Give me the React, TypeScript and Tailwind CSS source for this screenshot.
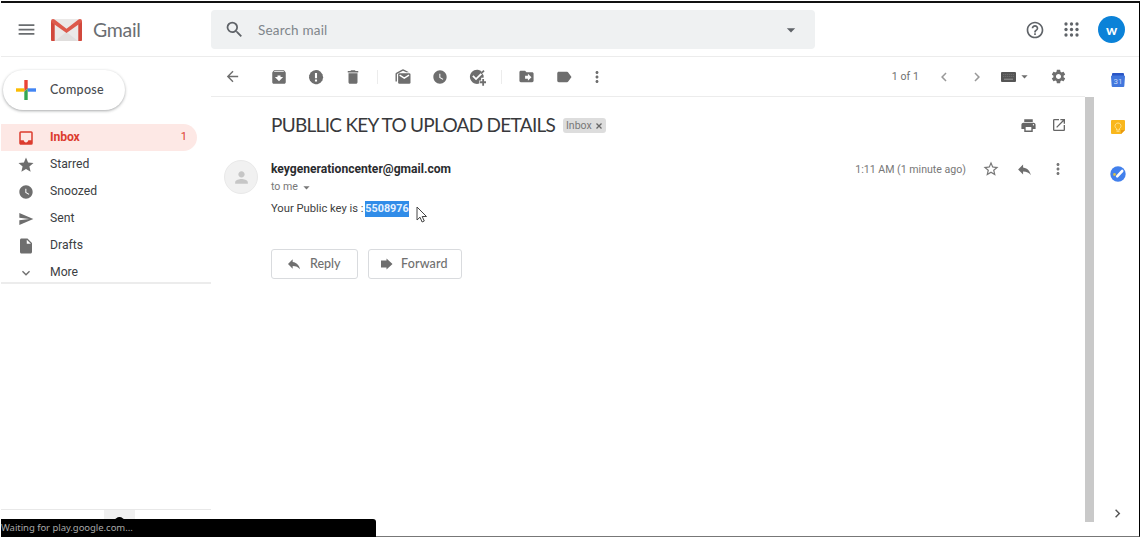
import type { ReactNode } from "react";
import {
  MdArchive,
  MdArrowBack,
  MdArrowDropDown,
  MdChevronLeft,
  MdChevronRight,
  MdDelete,
  MdDriveFileMove,
  MdExpandMore,
  MdHelpOutline,
  MdInsertDriveFile,
  MdLabel,
  MdMenu,
  MdMoreVert,
  MdOpenInNew,
  MdPerson,
  MdPrint,
  MdReply,
  MdSearch,
  MdSend,
  MdSettings,
  MdStar,
  MdStarBorder,
  MdWatchLater,
} from "react-icons/md";

function GmailLogo() {
  return (
    <svg width="31" height="22" viewBox="0 0 31 22">
      <rect x="1" y="0" width="29" height="22" rx="1.5" fill="#ebe9e8" />
      <path d="M4 22 15.5 13 27 22Z" fill="#e0dedd" />
      <path d="M0 2v18.500q0 1.500 1.500 1.500H3.500V5.500l12 8.500L27.500 5.500V22h2q1.500 0 1.500-1.500V2Q31 0 29 0 28 0 27.500.500L15.500 9.800 3.500.500Q3 0 2 0 0 0 0 2Z" fill="#dd5a4c" />
      <path d="M0 3v17.500q0 1.500 1.500 1.500H3.500V5.500ZM31 3v17.500q0 1.500-1.500 1.500H27.500V5.500Z" fill="#d1483c" />
    </svg>
  );
}

function AppsIcon() {
  const dots = [2, 7.5, 13];
  return (
    <svg width="15" height="15" viewBox="0 0 15 15" fill="#5f6368">
      {dots.map((y) => dots.map((x) => <circle key={`${x}-${y}`} cx={x} cy={y} r="1.65" />))}
    </svg>
  );
}

function PlusIcon() {
  return (
    <svg width="20" height="20" viewBox="0 0 20 20">
      <path d="M8.300 0h3.400v8.300l-3.400 3.400Z" fill="#ea4335" />
      <path d="M0 8.300h8.300v3.400H0Z" fill="#fbbc04" />
      <path d="M11.700 8.300H20v3.400h-8.300Z" fill="#4285f4" />
      <path d="M8.300 11.700l3.400-3.400V20h-3.400Z" fill="#34a853" />
    </svg>
  );
}

function SpamIcon() {
  return (
    <svg width="18" height="18" viewBox="0 0 24 24">
      <path d="M12 2.500 8.100 3.700 4.900 5.900 3 9.500 2.600 13 4 17l3 3.100 4 1.500h3l4-2 2.600-3.200.9-4.100-1-4L18 5l-3-2Z" fill="#6e6e6e" />
      <path d="M10.600 6.500h2.800v7h-2.800ZM10.600 15.300h2.800V18h-2.800Z" fill="#fff" />
    </svg>
  );
}

function UnreadIcon() {
  return (
    <svg width="18" height="18" viewBox="0 0 24 24">
      <path d="M2 18V8q0-1 1-1.600L11 2q1-.5 2 0l7 3.800h-3.600L12 3.700 3.900 8v10Z" fill="#6e6e6e" />
      <path d="M5.500 8.800Q5.500 7 7.300 7h12.900Q22 7 22 8.800v10.400q0 1.800-1.800 1.800H7.300q-1.800 0-1.800-1.800Z" fill="#6e6e6e" />
      <path d="m7.500 9.500 6.200 4 6.300-4" fill="none" stroke="#fff" strokeWidth="1.900" />
    </svg>
  );
}

function AddTaskIcon() {
  return (
    <svg width="18" height="18" viewBox="0 0 24 24">
      <path d="M17.500 4A9.500 9.500 0 1 0 15 20.800V16.500h2.500V13h3.200q.3-1.500.1-3Z" fill="#6e6e6e" />
      <path d="m6.500 10.500 4.200 4.200L21 4.500" fill="none" stroke="#fff" strokeWidth="2.400" />
      <path d="M20.500 2.500 22.200 4.200 18 8.300 16.500 6.600Z" fill="#6e6e6e" />
      <path d="M19 14.500h2.400v3.300h3.100v2.400h-3.100v3.300H19v-3.300h-3.200v-2.400H19Z" fill="#6e6e6e" />
    </svg>
  );
}

function KeyboardIcon() {
  return (
    <svg width="15" height="10" viewBox="0 0 15 10">
      <rect width="15" height="10" rx="1" fill="#555" />
      <path d="M2 2.500h11M2 4.500h11" stroke="#6c6c6c" strokeWidth="1" strokeDasharray="1.300 .7" />
      <path d="M3 7.200h9" stroke="#999" strokeWidth="1" />
    </svg>
  );
}

function InboxIcon() {
  return (
    <svg width="18" height="18" viewBox="0 0 24 24" fill="#dc3b2e">
      <path d="M19 3H5a2 2 0 0 0-2 2v14c0 1.100.9 2 2 2h14a2 2 0 0 0 2-2V5a2 2 0 0 0-2-2Zm0 12h-4c0 1.600-1.400 3-3 3s-3-1.400-3-3H5V5h14Z" />
    </svg>
  );
}

function ForwardIcon() {
  return (
    <svg width="13" height="12" viewBox="0 0 13 12" fill="#6e6e6e">
      <path d="M1 2.500h5.500V.5L12.500 6l-6 5.500v-2H1Z" />
    </svg>
  );
}

function CalendarIcon() {
  return (
    <svg width="14" height="14" viewBox="0 0 14 14">
      <rect x="1" width="12" height="5" rx="1" fill="#2a56c6" />
      <path d="M0 3.500q0-1 1-1h12q1 0 1 1L13.300 13q0 1-1 1H1.700q-1 0-1-1Z" fill="#4277dd" />
      <text x="7" y="11.300" textAnchor="middle" fontSize="8" fill="#c5d7fa" className="font-['Roboto',sans-serif]">31</text>
    </svg>
  );
}

function KeepIcon() {
  return (
    <svg width="14" height="14" viewBox="0 0 14 14">
      <path d="M1 0h12q1 0 1 1v9l-4 4H1q-1 0-1-1V1q0-1 1-1Z" fill="#f9b71c" />
      <path d="M10 14v-4h4Z" fill="#e89a10" />
      <path d="M5.500 8.600a3 3 0 1 1 3 0V10h-3Z" fill="none" stroke="#ffe08a" strokeWidth="1" />
      <path d="M5.500 11.300h3" stroke="#ffe08a" strokeWidth="1" />
    </svg>
  );
}

function TasksIcon() {
  return (
    <svg width="16" height="16" viewBox="0 0 16 16">
      <circle cx="8" cy="8" r="7.700" fill="#4280ec" />
      <path d="m7.200 10.300 5-5.300" stroke="#fff" strokeWidth="2.600" strokeLinecap="round" />
      <circle cx="4.500" cy="8.500" r="1.400" fill="#d9c04a" />
    </svg>
  );
}

function Pointer() {
  return (
    <svg width="12" height="18" viewBox="0 0 12 18">
      <path d="M1 1v13l3-2.800 2.100 4.800 2.200-1-2.100-4.500h4.300Z" fill="#fff" stroke="#444" strokeWidth="1" />
    </svg>
  );
}

function Slot({ children, wide = false }: { children: ReactNode; wide?: boolean }) {
  return <span className={`flex h-full items-center justify-center ${wide ? "w-[30px]" : "w-[37px]"}`}>{children}</span>;
}

function Divider() {
  return <span className="mx-1.5 h-3.5 w-px bg-[#ececec]" />;
}

const folders = [
  { label: "Starred", icon: <MdStar size={18} /> },
  { label: "Snoozed", icon: <MdWatchLater size={16} /> },
  { label: "Sent", icon: <MdSend size={16} /> },
  { label: "Drafts", icon: <MdInsertDriveFile size={18} /> },
  { label: "More", icon: <MdExpandMore size={16} /> },
];

function Header() {
  return (
    <header className="flex h-[54px] shrink-0 items-center border-b border-[#ececec]">
      <MdMenu size={21} className="ml-[15px] shrink-0 text-[#6a6d70]" />
      <div className="ml-[14px] shrink-0"><GmailLogo /></div>
      <span className="ml-[11px] w-[118px] pt-px text-[19.5px] tracking-[-0.3px] text-[#6b6e72]">Gmail</span>
      <div className="flex h-[39px] w-[604px] shrink-0 items-center rounded-[4px] bg-[#eff1f2]">
        <MdSearch size={21} className="ml-[13px] text-[#5f6368]" />
        <span className="ml-[13px] pt-px text-[13.5px] tracking-[0.18px] text-[#80868b]">Search mail</span>
        <MdArrowDropDown size={20} className="mr-[14px] ml-auto text-[#5f6368]" />
      </div>
      <MdHelpOutline size={20} className="ml-[210px] shrink-0 text-[#5f6368]" />
      <div className="ml-[19px] shrink-0"><AppsIcon /></div>
      <span className="ml-[19px] flex size-[27px] shrink-0 items-center justify-center rounded-full bg-[#0b82d8] pb-px text-[14px] font-bold text-white">w</span>
    </header>
  );
}

function Sidebar() {
  return (
    <nav className="flex w-[210px] shrink-0 flex-col">
      <button className="mt-[13px] ml-[2px] flex h-[40px] w-[122px] shrink-0 items-center rounded-full bg-white shadow-[0_1px_3px_rgba(60,64,67,0.45)]">
        <span className="ml-[13px]"><PlusIcon /></span>
        <span className="ml-[14px] text-[12.5px] font-medium tracking-[0.3px] text-[#4a4d51]">Compose</span>
      </button>
      <div className="mt-[14px] flex h-[27px] w-[196px] shrink-0 items-center rounded-r-full bg-[#fde8e5] font-['Roboto',sans-serif] text-[#dc3b2e]">
        <span className="flex w-[49px] justify-center pr-px pl-[2px]"><InboxIcon /></span>
        <span className="text-[12.2px] font-bold tracking-[-0.1px]">Inbox</span>
        <span className="mr-[10px] ml-auto text-[11px]">1</span>
      </div>
      {folders.map((f) => (
        <div key={f.label} className="flex h-[27px] shrink-0 items-center font-['Roboto',sans-serif] text-[12.2px] text-[#3c4043]">
          <span className="flex w-[49px] justify-center pr-px pl-[2px] text-[#6e6e6e]">{f.icon}</span>
          <span className="-mt-px">{f.label}</span>
        </div>
      ))}
      <div className="-mt-[4px] h-[2px] shrink-0 bg-[#ececec]" />
      <div className="mt-auto h-[27px] shrink-0 border-t border-[#e8e8e8]">
        <div className="ml-[103px] flex h-full w-[31px] justify-center bg-[#f0f0f0] pt-[7px]">
          <span className="size-[9px] rounded-full bg-black" />
        </div>
      </div>
    </nav>
  );
}

function Toolbar() {
  return (
    <div className="flex h-[40px] shrink-0 items-center border-b border-[#ececec] text-[#6e6e6e]">
      <MdArrowBack size={17} className="ml-[13px]" />
      <span className="w-[19px]" />
      <Slot><MdArchive size={18} /></Slot>
      <Slot><SpamIcon /></Slot>
      <Slot><MdDelete size={18} /></Slot>
      <Divider />
      <Slot><UnreadIcon /></Slot>
      <Slot><MdWatchLater size={16} /></Slot>
      <Slot><AddTaskIcon /></Slot>
      <Divider />
      <Slot><MdDriveFileMove size={17} /></Slot>
      <Slot><MdLabel size={18} /></Slot>
      <Slot wide><MdMoreVert size={18} /></Slot>
      <span className="ml-auto pt-px font-['Roboto',sans-serif] text-[10.5px] tracking-[0.1px]">1 of 1</span>
      <MdChevronLeft size={18} className="ml-[16px] text-[#999]" />
      <MdChevronRight size={18} className="ml-[15px] text-[#999]" />
      <span className="ml-[15px] pt-px"><KeyboardIcon /></span>
      <MdArrowDropDown size={15} className="ml-[1px]" />
      <MdSettings size={17} className="mr-[18px] ml-[18px]" />
    </div>
  );
}

function Message() {
  return (
    <article className="flex flex-col">
      <div className="mt-[16px] flex h-[24px] items-center pl-[60px]">
        <h1 className="w-[284px] text-[19px] tracking-[-0.71px] whitespace-nowrap text-[#38393c]">PUBLLIC KEY TO UPLOAD DETAILS</h1>
        <span className="ml-[8px] mt-px flex h-[15px] w-[43px] shrink-0 items-center rounded-[3px] bg-[#ddd] pl-[3px] font-['Roboto',sans-serif] text-[10.5px] text-[#777]">
          Inbox
          <svg className="mt-px ml-[4px]" width="6" height="6" viewBox="0 0 6 6" stroke="#666" strokeWidth="1.300"><path d="m.5.500 5 5m0-5-5 5" /></svg>
        </span>
        <MdPrint size={17} className="ml-auto text-[#666]" />
        <MdOpenInNew size={16} className="mr-[18px] ml-[14px] text-[#666]" />
      </div>
      <div className="mt-[16px] flex">
        <span className="mt-[7px] ml-[13px] flex size-[34px] shrink-0 items-center justify-center rounded-full border border-[#e9e9e9] bg-[#f1f1f1]">
          <MdPerson size={19} className="text-[#c6c6c6]" />
        </span>
        <div className="ml-[13px] flex grow flex-col font-['Roboto',sans-serif]">
          <div className="flex h-[32px] items-center">
            <span className="text-[12.1px] font-bold text-[#2a2b2e]">keygenerationcenter@gmail.com</span>
            <span className="ml-auto pt-px text-[10.6px] text-[#777]">1:11 AM (1 minute ago)</span>
            <MdStarBorder size={18} className="ml-[16px] text-[#777]" />
            <MdReply size={17} className="ml-[16px] text-[#6e6e6e]" />
            <MdMoreVert size={18} className="mr-[18px] ml-[16px] text-[#777]" />
          </div>
          <div className="flex h-[4px] items-center text-[10.6px] text-[#777]">
            to me<MdArrowDropDown size={15} className="ml-px" />
          </div>
          <div className="mt-[11px] flex h-[18px] items-center text-[11.2px] text-[#404040]">
            <span className="w-[91px] whitespace-nowrap">Your Public key is :</span>
            <b className="ml-[3px] flex h-[16px] w-[44px] items-center justify-center bg-[#308ce8] text-[10.8px] text-[#e4f1ff]">5508976</b>
            <span className="mt-[12px] ml-[7px]"><Pointer /></span>
          </div>
        </div>
      </div>
      <div className="mt-[31px] ml-[60px] flex gap-[10px] text-[12.5px] font-medium text-[#707070]">
        <button className="flex h-[30px] w-[87px] items-center rounded-[3px] border border-[#d9dbde]">
          <MdReply size={16} className="ml-[14px]" />
          <span className="ml-[8px]">Reply</span>
        </button>
        <button className="flex h-[30px] w-[94px] items-center rounded-[3px] border border-[#d9dbde]">
          <span className="ml-[11px]"><ForwardIcon /></span>
          <span className="ml-[8px] tracking-[0.15px]">Forward</span>
        </button>
      </div>
    </article>
  );
}

export default function App() {
  return (
    <div className="relative h-[538px] w-[1141px] overflow-hidden bg-white pt-px pl-px font-['Lato',sans-serif]">
      <div className="flex h-[536px] w-[1139px] flex-col border-t-2 border-r border-b border-t-[#111] border-r-black border-b-[#777]">
        <Header />
        <div className="flex min-h-0 grow">
          <Sidebar />
          <main className="flex w-[874px] shrink-0 flex-col">
            <Toolbar />
            <Message />
          </main>
          <div className="mt-[40px] h-[425px] w-[9px] shrink-0 bg-[#c9c9c9]" />
          <aside className="flex grow flex-col items-center pl-[3px]">
            <div className="mt-[16px]"><CalendarIcon /></div>
            <div className="mt-[33px]"><KeepIcon /></div>
            <div className="mt-[32px]"><TasksIcon /></div>
            <MdChevronRight size={17} className="mt-auto mr-[2px] mb-[14px] text-[#555]" />
          </aside>
        </div>
      </div>
      <div className="absolute bottom-px left-px flex h-[18px] w-[375px] items-center rounded-tr-[3px] bg-black font-['Noto_Sans',sans-serif] text-[9.5px] tracking-[-0.04px] text-[#a8a8a8]">
        Waiting for play.google.com...
      </div>
    </div>
  );
}
